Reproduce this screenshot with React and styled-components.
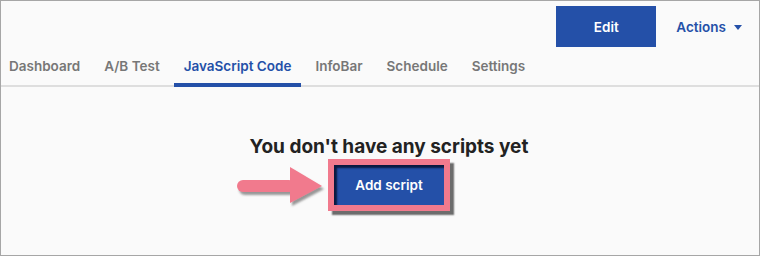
import React from "react";
import styled, { createGlobalStyle } from "styled-components";

const Global = createGlobalStyle`
  html, body { margin: 0; padding: 0; background: #fafafa; }
  * { box-sizing: border-box; }
`;

const Frame = styled.div`
  width: 760px;
  height: 256px;
  border: 1px solid #a6a6a6;
  background: #fafafa;
  font-family: Inter, "Noto Sans", sans-serif;
  overflow: hidden;
`;

const Header = styled.div`
  display: flex;
  justify-content: flex-end;
  align-items: center;
  gap: 20px;
  padding: 5px 17px 0 0;
  height: 46px;
`;

const PrimaryButton = styled.button`
  width: 100px;
  height: 41px;
  border: none;
  background: #2450a8;
  color: #fff;
  font-family: inherit;
  font-size: 13.5px;
  font-weight: 600;
  cursor: pointer;
`;

const LinkButton = styled.button`
  display: flex;
  align-items: center;
  gap: 8px;
  border: none;
  background: none;
  padding: 0;
  color: #2450a8;
  font-family: inherit;
  font-size: 13.5px;
  font-weight: 600;
  cursor: pointer;
`;

const Caret = styled.span`
  width: 0;
  height: 0;
  border-left: 4.5px solid transparent;
  border-right: 4.5px solid transparent;
  border-top: 5px solid #2450a8;
  margin-top: 1px;
`;

const Tabs = styled.div`
  display: flex;
  gap: 4px;
  height: 40px;
  border-bottom: 2px solid #dedede;
`;

const Tab = styled.div`
  position: relative;
  display: flex;
  align-items: center;
  padding: 0 10px;
  height: 38px;
  font-size: 13.5px;
  font-weight: 600;
  color: ${(p) => (p.$active ? "#2450a8" : "#777777")};
  &:first-child { padding-left: 8px; }
  ${(p) =>
    p.$active &&
    `&::after {
      content: "";
      position: absolute;
      left: 0; right: 0; bottom: -2px;
      height: 4px;
      background: #2450a8;
    }`}
`;

const Empty = styled.div`
  display: flex;
  flex-direction: column;
  align-items: center;
  padding: 49px 0 0 18px;
`;

const Heading = styled.h2`
  margin: 0;
  font-size: 19px;
  line-height: 22px;
  font-weight: 700;
  color: #222222;
`;

const Highlight = styled.div`
  position: relative;
  margin-top: 1px;
  border: 6px solid #f17a8d;
  box-shadow: 4px 4px 1.5px rgba(60, 60, 60, 0.75);
`;

const AddButton = styled.button`
  display: block;
  width: 110px;
  height: 40px;
  border: none;
  background: #2450a8;
  box-shadow: inset 3px 3px 2px rgba(5, 15, 45, 0.85);
  color: #fff;
  font-family: inherit;
  font-size: 13.5px;
  font-weight: 600;
  cursor: pointer;
`;

const Arrow = styled.svg`
  position: absolute;
  left: -99px;
  top: -2px;
  overflow: visible;
`;

const ArrowIcon = () => (
  <Arrow width="92" height="48" viewBox="0 0 92 48">
    <defs>
      <filter id="sh" x="-20%" y="-20%" width="150%" height="160%">
        <feDropShadow dx="2" dy="3" stdDeviation="1.2" floodColor="#555" floodOpacity="0.6" />
      </filter>
    </defs>
    <g filter="url(#sh)" fill="#f17a8d">
      <rect x="2" y="17" width="58" height="12" rx="6" />
      <polygon points="55,4 87,23 55,40" />
    </g>
  </Arrow>
);

export default function App() {
  return (
    <>
      <Global />
      <Frame>
        <Header>
          <PrimaryButton>Edit</PrimaryButton>
          <LinkButton>
            Actions <Caret />
          </LinkButton>
        </Header>
        <Tabs>
          <Tab>Dashboard</Tab>
          <Tab>A/B Test</Tab>
          <Tab $active>JavaScript Code</Tab>
          <Tab>InfoBar</Tab>
          <Tab>Schedule</Tab>
          <Tab>Settings</Tab>
        </Tabs>
        <Empty>
          <Heading>You don't have any scripts yet</Heading>
          <Highlight>
            <ArrowIcon />
            <AddButton>Add script</AddButton>
          </Highlight>
        </Empty>
      </Frame>
    </>
  );
}
